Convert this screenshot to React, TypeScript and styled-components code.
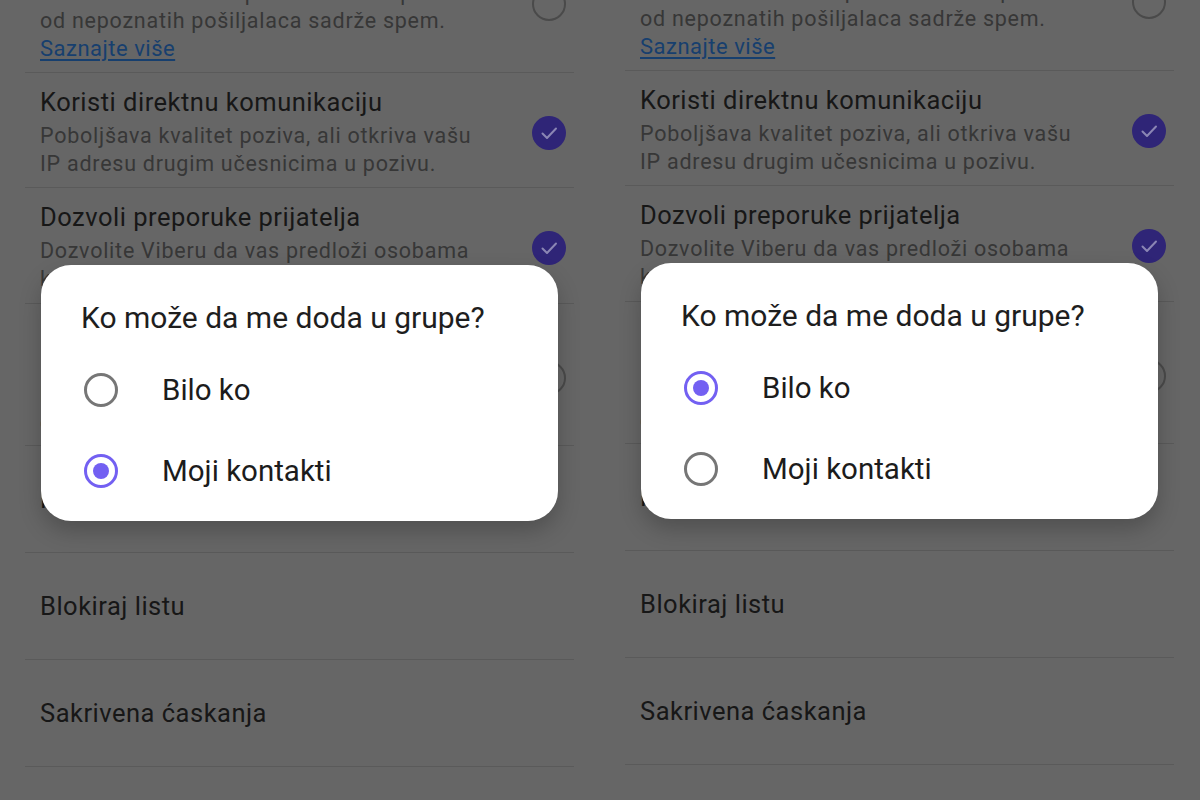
import React from "react";
import styled, { createGlobalStyle } from "styled-components";

const GlobalStyle = createGlobalStyle`
  html, body { margin: 0; padding: 0; }
  body { font-family: Roboto, "Noto Sans", "Liberation Sans", sans-serif; background: #666666; }
`;

const Screen = styled.div`
  display: grid;
  grid-template-columns: 600px 600px;
  width: 1200px;
  height: 800px;
  overflow: hidden;
`;

const Panel = styled.div`
  position: relative;
  height: 800px;
  overflow: hidden;
  background: #666666;
`;

const List = styled.div<{ $shift: number }>`
  margin: ${(p) => -p.$shift}px 26px 0 25px;
`;

const Row = styled.div<{ $simple?: boolean; $extra?: number }>`
  display: flex;
  align-items: center;
  gap: 20px;
  border-bottom: 1px solid #5a5a5a;
  padding: ${(p) =>
    p.$simple ? "38px 8px 38px 15px" : `14px 8px ${9 + (p.$extra || 0)}px 15px`};
`;

const TextCol = styled.div`
  flex: 1;
  min-width: 0;
`;

const Title = styled.div`
  font-size: 25.5px;
  letter-spacing: 0.5px;
  line-height: 30px;
  color: #171717;
  white-space: nowrap;
`;

const Subtitle = styled.div`
  margin-top: 5px;
  font-size: 21.5px;
  letter-spacing: 0.75px;
  line-height: 28px;
  color: #373737;
  white-space: pre;
`;

const Link = styled.a`
  display: block;
  font-size: 22px;
  letter-spacing: 0.5px;
  line-height: 28px;
  color: #173f6e;
  text-decoration: underline;
  text-underline-offset: 3px;
`;

const Check = styled.span<{ $on: boolean }>`
  flex: none;
  width: 34px;
  height: 34px;
  box-sizing: border-box;
  border-radius: 50%;
  display: flex;
  align-items: center;
  justify-content: center;
  background: ${(p) => (p.$on ? "#2f2577" : "transparent")};
  border: ${(p) => (p.$on ? "none" : "2px solid #4a4a4a")};
`;

const Dialog = styled.div<{ $top: number }>`
  position: absolute;
  left: 41px;
  top: ${(p) => p.$top}px;
  width: 517px;
  height: 256px;
  box-sizing: border-box;
  padding: 35px 0 10px;
  background: #ffffff;
  border-radius: 30px;
  box-shadow: 0 10px 22px rgba(0, 0, 0, 0.22);
`;

const DialogTitle = styled.div`
  padding-left: 40px;
  margin-bottom: 13px;
  font-size: 30px;
  line-height: 36px;
  color: #1e1e1e;
`;

const Option = styled.div`
  display: flex;
  align-items: center;
  gap: 44px;
  height: 81px;
  padding-left: 43px;
`;

const OptionLabel = styled.span`
  font-size: 29.5px;
  line-height: 36px;
  color: #1c1c1c;
`;

const Radio = styled.span<{ $on: boolean }>`
  flex: none;
  width: 34px;
  height: 34px;
  box-sizing: border-box;
  border-radius: 50%;
  border: 3px solid ${(p) => (p.$on ? "#7360f2" : "#767676")};
  display: flex;
  align-items: center;
  justify-content: center;
  &::after {
    content: "";
    display: ${(p) => (p.$on ? "block" : "none")};
    width: 16px;
    height: 16px;
    border-radius: 50%;
    background: #7360f2;
  }
`;

const CheckMark = () => (
  <svg width="34" height="34" viewBox="0 0 34 34">
    <polyline
      points="10.5,17.5 15,22 24,12.5"
      fill="none"
      stroke="#8b86b4"
      strokeWidth="2"
      strokeLinecap="round"
      strokeLinejoin="round"
    />
  </svg>
);

type Choice = "all" | "contacts";

const PhoneScreen: React.FC<{ shift: number; choice: Choice }> = ({ shift, choice }) => (
  <Panel>
    <List $shift={70 + shift}>
      <Row>
        <TextCol>
          <Title>Proveri poruke za spem</Title>
          <Subtitle>{"Dozvolite Viberu da proverava da li poruke\nod nepoznatih pošiljalaca sadrže spem."}</Subtitle>
          <Link>Saznajte više</Link>
        </TextCol>
        <Check $on={false} />
      </Row>
      <Row>
        <TextCol>
          <Title>Koristi direktnu komunikaciju</Title>
          <Subtitle>{"Poboljšava kvalitet poziva, ali otkriva vašu\nIP adresu drugim učesnicima u pozivu."}</Subtitle>
        </TextCol>
        <Check $on>
          <CheckMark />
        </Check>
      </Row>
      <Row $extra={1}>
        <TextCol>
          <Title>Dozvoli preporuke prijatelja</Title>
          <Subtitle>{"Dozvolite Viberu da vas predloži osobama\nkoje možda poznajete."}</Subtitle>
        </TextCol>
        <Check $on>
          <CheckMark />
        </Check>
      </Row>
      <Row $extra={-1}>
        <TextCol>
          <Title>Personalizuj sadržaj</Title>
          <Subtitle>{"Dozvolite Viberu da koristi vaše podatke\nkako bi vam prikazao sadržaj koji vam\nodgovara."}</Subtitle>
        </TextCol>
        <Check $on={false} />
      </Row>
      <Row $simple>
        <TextCol>
          <Title>Ko može da me doda u grupe</Title>
        </TextCol>
      </Row>
      <Row $simple>
        <TextCol>
          <Title>Blokiraj listu</Title>
        </TextCol>
      </Row>
      <Row $simple>
        <TextCol>
          <Title>Sakrivena ćaskanja</Title>
        </TextCol>
      </Row>
      <Row $simple>
        <TextCol>
          <Title>Očisti pouzdane kontakte</Title>
        </TextCol>
      </Row>
    </List>
    <Dialog $top={265 - shift}>
      <DialogTitle>Ko može da me doda u grupe?</DialogTitle>
      <Option>
        <Radio $on={choice === "all"} />
        <OptionLabel>Bilo ko</OptionLabel>
      </Option>
      <Option>
        <Radio $on={choice === "contacts"} />
        <OptionLabel>Moji kontakti</OptionLabel>
      </Option>
    </Dialog>
  </Panel>
);

export default function App() {
  return (
    <>
      <GlobalStyle />
      <Screen>
        <PhoneScreen shift={0} choice="contacts" />
        <PhoneScreen shift={2} choice="all" />
      </Screen>
    </>
  );
}
